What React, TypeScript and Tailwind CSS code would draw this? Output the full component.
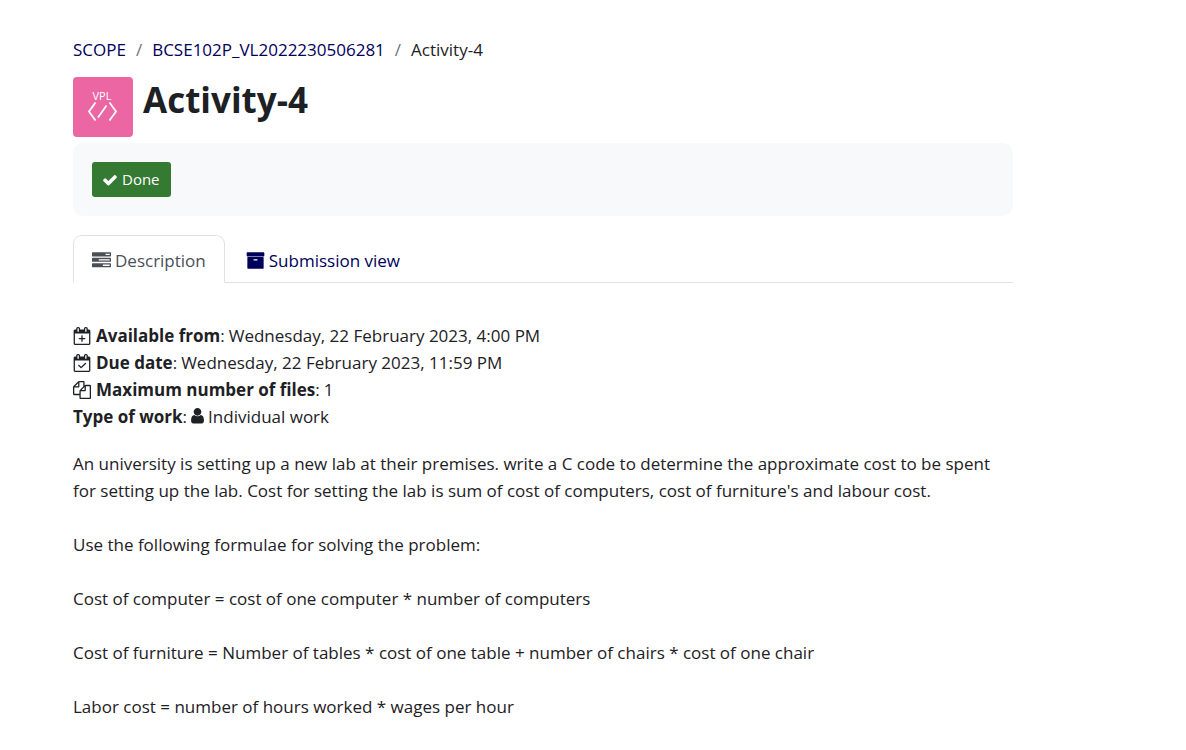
import type { ReactNode } from "react";

function Icon({ d, className, viewBox = "0 0 1792 1792" }: { d: string; className: string; viewBox?: string }) {
  return (
    <svg viewBox={viewBox} fill="currentColor" aria-hidden="true" className={`inline-block shrink-0 ${className}`}>
      <path fillRule="nonzero" d={d} />
    </svg>
  );
}

const CALENDAR =
  "M1600 256q52 0 90 38t38 90v1280q0 52-38 90t-90 38h-1408q-52 0-90-38t-38-90v-1280q0-52 38-90t90-38h128v-96q0-66 47-113t113-47h64q66 0 113 47t47 113v96h384v-96q0-66 47-113t113-47h64q66 0 113 47t47 113v96h128zm-384-96v288q0 14 9 23t23 9h64q14 0 23-9t9-23v-288q0-14-9-23t-23-9h-64q-14 0-23 9t-9 23zm-768 0v288q0 14 9 23t23 9h64q14 0 23-9t9-23v-288q0-14-9-23t-23-9h-64q-14 0-23 9t-9 23zm1152 1504v-1024h-1408v1024h1408z";

const icons = {
  check:
    "M1671 566q0 40-28 68l-724 724-136 136q-28 28-68 28t-68-28l-136-136-362-362q-28-28-28-68t28-68l136-136q28-28 68-28t68 28l294 295 656-657q28-28 68-28t68 28l136 136q28 28 28 68z",
  tasks:
    "M1024 1408h640v-128h-640v128zm-384-512h1024v-128h-1024v128zm640-512h384v-128h-384v128zm512 832v256q0 26-19 45t-45 19h-1664q-26 0-45-19t-19-45v-256q0-26 19-45t45-19h1664q26 0 45 19t19 45zm0-512v256q0 26-19 45t-45 19h-1664q-26 0-45-19t-19-45v-256q0-26 19-45t45-19h1664q26 0 45 19t19 45zm0-512v256q0 26-19 45t-45 19h-1664q-26 0-45-19t-19-45v-256q0-26 19-45t45-19h1664q26 0 45 19t19 45z",
  archive:
    "M1088 832q0-26-19-45t-45-19h-256q-26 0-45 19t-19 45 19 45 45 19h256q26 0 45-19t19-45zm576-192v960q0 26-19 45t-45 19h-1408q-26 0-45-19t-19-45v-960q0-26 19-45t45-19h1408q26 0 45 19t19 45zm64-448v256q0 26-19 45t-45 19h-1536q-26 0-45-19t-19-45v-256q0-26 19-45t45-19h1536q26 0 45 19t19 45z",
  calendarPlus:
    CALENDAR +
    "M960 1088h224q14 0 23 9t9 23v64q0 14-9 23t-23 9h-224v224q0 14-9 23t-23 9h-64q-14 0-23-9t-9-23v-224h-224q-14 0-23-9t-9-23v-64q0-14 9-23t23-9h224v-224q0-14 9-23t23-9h64q14 0 23 9t9 23v224z",
  calendarCheck:
    CALENDAR +
    "M1303 964l-467 466q-10 9-23 9t-22-9l-270-269q-9-10-9-23t9-22l46-46q9-9 22-9t23 9l201 201 398-398q10-9 23-9t22 9l47 46q9 9 9 22t-9 23z",
  files:
    "M1696 384q40 0 68 28t28 68v1216q0 40-28 68t-68 28h-960q-40 0-68-28t-28-68v-288h-544q-40 0-68-28t-28-68v-672q0-40 20-88t48-76l408-408q28-28 76-48t88-20h416q40 0 68 28t28 68v328q68-40 128-40h416zm-544 213l-299 299h299v-299zm-640-384l-299 299h299v-299zm196 647l316-316v-416h-384v416q0 40-28 68t-68 28h-416v640h512v-256q0-40 20-88t48-76zm956 804v-1152h-384v416q0 40-28 68t-68 28h-416v640h896z",
  user:
    "M1536 1399q0 109-62.500 187t-150.500 78h-854q-88 0-150.500-78t-62.500-187q0-85 8.500-160.500t31.500-152 58.500-131 94-89 134.500-34.500q131 128 313 128t313-128q76 0 134.500 34.500t94 89 58.500 131 31.500 152 8.500 160.500zm-256-887q0 159-112.500 271.500t-271.500 112.500-271.500-112.500-112.500-271.500 112.500-271.500 271.500-112.500 271.500 112.500 112.500 271.500z",
};

function Detail({ icon, label, children }: { icon?: string; label: string; children: ReactNode }) {
  return (
    <div className="flex items-center gap-[5px]">
      {icon && <Icon d={icon} className="size-[18px]" />}
      <p className="flex items-center gap-1">
        <span>
          <b className="font-bold">{label}</b>:
        </span>
        {children}
      </p>
    </div>
  );
}

const formulae = [
  "Use the following formulae for solving the problem:",
  "Cost of computer = cost of one computer * number of computers",
  "Cost of furniture = Number of tables * cost of one table + number of chairs * cost of one chair",
  "Labor cost = number of hours worked * wages per hour",
];

export default function App() {
  return (
    <main className="bg-white pt-9 pr-[173px] pb-7 pl-[73px] font-['Open_Sans','Noto_Sans',sans-serif] text-[17px] leading-[27px] text-[#1d2125]">
      <nav aria-label="Breadcrumb">
        <ol className="flex flex-wrap gap-[10px]">
          <li><a href="#scope" className="text-[#00005b]">SCOPE</a></li>
          <li aria-hidden="true" className="text-[#6a737b]">/</li>
          <li><a href="#course" className="text-[#00005b]">BCSE102P_VL2022230506281</a></li>
          <li aria-hidden="true" className="text-[#6a737b]">/</li>
          <li aria-current="page">Activity-4</li>
        </ol>
      </nav>

      <header className="mt-[14px] flex items-start gap-[10px]">
        <svg viewBox="0 0 60 60" className="size-[60px] shrink-0 rounded bg-[#eb66a2]" role="img" aria-label="VPL">
          <text x="29" y="23" textAnchor="middle" fill="#fff" fontSize="11" fontFamily="Open Sans, sans-serif">VPL</text>
          <path d="M22.500 25.500 16 34.500l6.500 9M36.500 25.500 43 34.500l-6.500 9M33.500 28.500 25 40.500" fill="none" stroke="#fff" strokeWidth="1.800" />
        </svg>
        <h1 className="text-[35px] leading-[46px] font-bold">Activity-4</h1>
      </header>

      <section aria-label="Completion" className="mt-[6px] rounded-[10px] bg-[#f8f9fb] p-[19px]">
        <button type="button" className="flex h-[35px] items-center gap-1 rounded-[3px] bg-[#357a32] px-[10px] pr-[11px] text-[15px] text-white">
          <Icon d={icons.check} className="size-4" />
          Done
        </button>
      </section>

      <nav aria-label="Activity" className="mt-[19px] flex border-b border-[#dee2e6]">
        <a href="#description" aria-current="page" className="-mb-px flex h-12 items-center gap-1 rounded-t-[9px] border border-b-white border-[#dee2e6] px-[18px] pt-[2px] text-[#495057]">
          <Icon d={icons.tasks} className="size-[19px]" />
          Description
        </a>
        <a href="#submission" className="-mb-px flex h-12 items-center gap-1 px-[21px] pt-[2px] text-[#00005b]">
          <Icon d={icons.archive} className="size-[19px]" />
          Submission view
        </a>
      </nav>

      <section className="mt-[39px]">
        <Detail icon={icons.calendarPlus} label="Available from">Wednesday, 22 February 2023, 4:00 PM</Detail>
        <Detail icon={icons.calendarCheck} label="Due date">Wednesday, 22 February 2023, 11:59 PM</Detail>
        <Detail icon={icons.files} label="Maximum number of files">1</Detail>
        <Detail label="Type of work">
          <Icon d={icons.user} viewBox="256 128 1280 1792" className="h-[18px] w-[13px]" />
          Individual work
        </Detail>
      </section>

      <article className="mt-5 flex flex-col gap-[27px]">
        <p>
          An university is setting up a new lab at their premises. write a C code to determine the approximate cost to be spent
          for setting up the lab. Cost for setting the lab is sum of cost of computers, cost of furniture's and labour cost.
        </p>
        {formulae.map((line) => (
          <p key={line}>{line}</p>
        ))}
      </article>
    </main>
  );
}
